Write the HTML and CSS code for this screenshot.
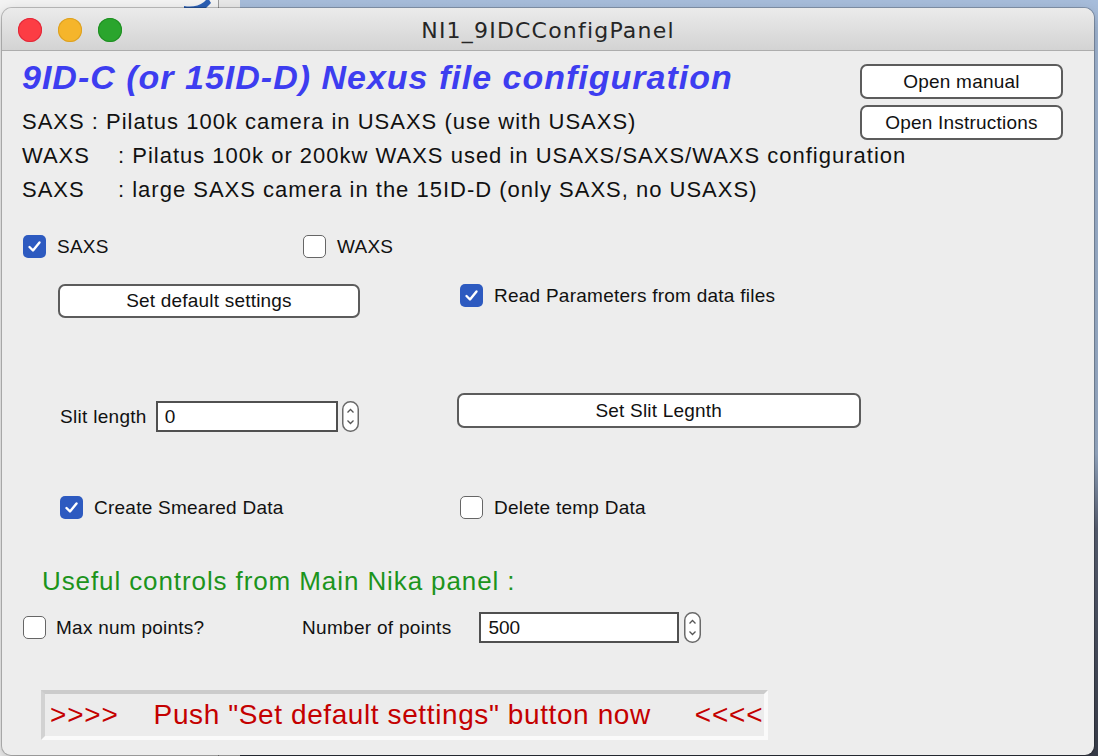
FILE: index.html
```html
<!DOCTYPE html>
<html>
<head>
<meta charset="utf-8">
<title>NI1_9IDCConfigPanel</title>
<link rel="stylesheet" href="styles.css">
</head>
<body>
<div class="backwin">
  <svg class="backarrow" width="32" height="16" viewBox="0 0 32 16"><path d="M2 12 Q14 14 22 8 L26 4 L29 9 L24 14 Q12 18 2 16 Z" fill="#2b5fb4"/></svg>
</div>
<div class="window">
  <div class="titlebar">
    <div class="lights">
      <span class="light red"></span>
      <span class="light yellow"></span>
      <span class="light green"></span>
    </div>
    <div class="title">NI1_9IDCConfigPanel</div>
  </div>
  <div class="panel">
    <div class="header">
      <div class="intro">
        <h1 class="heading">9ID-C (or 15ID-D) Nexus file configuration</h1>
        <p class="line">SAXS : Pilatus 100k camera in USAXS (use with USAXS)</p>
        <p class="line"><span class="tag">WAXS</span>: Pilatus 100k or 200kw WAXS used in USAXS/SAXS/WAXS configuration</p>
        <p class="line"><span class="tag">SAXS</span>: large SAXS camera in the 15ID-D (only SAXS, no USAXS)</p>
      </div>
      <div class="side-buttons">
        <button class="btn btn-side">Open manual</button>
        <button class="btn btn-side">Open Instructions</button>
      </div>
    </div>

    <div class="row row-det">
      <label class="check w-saxs"><span class="box on"><svg width="23" height="23" viewBox="0 0 23 23"><path d="M6.5 12 L10 15.5 L16.5 7.5" fill="none" stroke="#fff" stroke-width="2.4" stroke-linecap="round" stroke-linejoin="round"/></svg></span>SAXS</label>
      <label class="check"><span class="box"></span>WAXS</label>
    </div>

    <div class="row row-default">
      <button class="btn btn-default">Set default settings</button>
      <label class="check check-read"><span class="box on"><svg width="23" height="23" viewBox="0 0 23 23"><path d="M6.5 12 L10 15.5 L16.5 7.5" fill="none" stroke="#fff" stroke-width="2.4" stroke-linecap="round" stroke-linejoin="round"/></svg></span>Read Parameters from data files</label>
    </div>

    <div class="row row-slit">
      <div class="field field-slit">
        <span class="field-label">Slit length</span>
        <span class="input input-slit">0</span>
        <svg class="stepper" width="17" height="31" viewBox="0 0 17 31"><rect x="0.75" y="0.75" width="15.5" height="29.5" rx="7.5" fill="#fff" stroke="#6a6a6a" stroke-width="1.5"/><path d="M5.5 11.5 L8.5 8.5 L11.5 11.5" fill="none" stroke="#555" stroke-width="1.3"/><path d="M5.5 19.5 L8.5 22.5 L11.5 19.5" fill="none" stroke="#555" stroke-width="1.3"/></svg>
      </div>
      <button class="btn btn-slit">Set Slit Legnth</button>
    </div>

    <div class="row row-smear">
      <label class="check w-smear"><span class="box on"><svg width="23" height="23" viewBox="0 0 23 23"><path d="M6.5 12 L10 15.5 L16.5 7.5" fill="none" stroke="#fff" stroke-width="2.4" stroke-linecap="round" stroke-linejoin="round"/></svg></span>Create Smeared Data</label>
      <label class="check"><span class="box"></span>Delete temp Data</label>
    </div>

    <h2 class="useful">Useful controls from Main Nika panel :</h2>

    <div class="row row-points">
      <label class="check check-max w-max"><span class="box"></span>Max num points?</label>
      <span class="field-label">Number of points</span>
      <span class="input input-points">500</span>
      <svg class="stepper" width="17" height="31" viewBox="0 0 17 31"><rect x="0.75" y="0.75" width="15.5" height="29.5" rx="7.5" fill="#fff" stroke="#6a6a6a" stroke-width="1.5"/><path d="M5.5 11.5 L8.5 8.5 L11.5 11.5" fill="none" stroke="#555" stroke-width="1.3"/><path d="M5.5 19.5 L8.5 22.5 L11.5 19.5" fill="none" stroke="#555" stroke-width="1.3"/></svg>
    </div>

    <div class="notice">
      <span class="arrows">&gt;&gt;&gt;&gt;</span>
      <span class="notice-text">Push "Set default settings" button now</span>
      <span class="arrows">&lt;&lt;&lt;&lt;</span>
    </div>
  </div>
</div>
</body>
</html>
```

FILE: styles.css
```css
* { box-sizing: border-box; }

html, body {
  margin: 0;
  padding: 0;
}

body {
  width: 1098px;
  height: 756px;
  overflow: hidden;
  position: relative;
  font-family: "Liberation Sans", Arial, sans-serif;
  background: linear-gradient(#a7bddb 0, #9cb0cb 60%, #5a6174 70%, #3b404d 100%);
}

.backwin {
  position: absolute;
  left: 0;
  top: 0;
  width: 240px;
  height: 756px;
  background: linear-gradient(to right, #f3f3f3 0, #f3f3f3 218px, #9c9c9c 218px, #9c9c9c 219px, #e9e9e9 219px);
}

.backarrow {
  position: absolute;
  left: 182px;
  top: -6px;
}

.window {
  position: absolute;
  left: 2px;
  top: 8px;
  width: 1092px;
  height: 747px;
  background: #ededed;
  border-radius: 10px 10px 9px 9px;
  box-shadow: 0 0 0 1px rgba(0, 0, 0, 0.22), 0 6px 16px rgba(0, 0, 0, 0.25);
  overflow: hidden;
}

.titlebar {
  height: 43px;
  display: grid;
  align-items: center;
  background: linear-gradient(#ebebeb, #d3d3d3);
  border-bottom: 1px solid #adadad;
}

.lights,
.title {
  grid-area: 1 / 1;
}

.lights {
  display: flex;
  gap: 16px;
  padding-left: 16px;
  justify-self: start;
  margin-top: 2px;
}

.light {
  width: 24px;
  height: 24px;
  border-radius: 50%;
}

.red { background: #fc3d44; box-shadow: inset 0 0 0 1px #e0283a; }
.yellow { background: #f5b52b; box-shadow: inset 0 0 0 1px #dba022; }
.green { background: #2aa52d; box-shadow: inset 0 0 0 1px #1f8e22; }

.title {
  justify-self: center;
  font-family: "DejaVu Sans", sans-serif;
  font-size: 22px;
  letter-spacing: 1.2px;
  color: #262626;
  margin-top: 3px;
}

.panel {
  padding: 0 31px 0 20px;
  display: flex;
  flex-direction: column;
  align-items: flex-start;
}

.header {
  display: grid;
  width: 100%;
}

.intro,
.side-buttons {
  grid-area: 1 / 1;
}

.side-buttons {
  justify-self: end;
  display: flex;
  flex-direction: column;
  gap: 6px;
  padding-top: 13px;
}

.heading {
  margin: 6px 0 0 0;
  font-size: 34px;
  line-height: 40px;
  font-weight: bold;
  font-style: italic;
  letter-spacing: 1px;
  color: #3d3df0;
}

.line {
  margin: 0;
  font-size: 22px;
  line-height: 34px;
  letter-spacing: 1px;
  color: #111;
  white-space: nowrap;
}

.heading + .line {
  margin-top: 8px;
}

.tag {
  display: inline-block;
  width: 96px;
}

.btn {
  font-family: "Liberation Sans", Arial, sans-serif;
  font-size: 19px;
  letter-spacing: 0.2px;
  color: #111;
  background: #fff;
  border: 2px solid #5c5c5c;
  border-radius: 7px;
  padding: 0;
  display: flex;
  align-items: center;
  justify-content: center;
}

.btn-side {
  width: 203px;
  height: 35px;
}

.row {
  display: flex;
  align-items: flex-start;
}

.check {
  display: flex;
  align-items: center;
  gap: 11px;
  font-size: 19px;
  letter-spacing: 0.25px;
  color: #111;
  white-space: nowrap;
}

.box {
  width: 23px;
  height: 23px;
  border-radius: 5px;
  background: #fff;
  border: 1.5px solid #666;
  flex: none;
  display: flex;
}

.box.on {
  background: #2d5ac0;
  border: 0;
}

.row-det {
  margin-top: 28px;
  margin-left: 1px;
}

.w-saxs {
  width: 280px;
}

.row-default {
  margin-top: 26px;
}

.btn-default {
  margin-left: 36px;
  width: 302px;
  height: 34px;
}

.check-read {
  margin-left: 100px;
  margin-top: 0;
}

.row-slit {
  margin-top: 75px;
}

.field {
  display: flex;
  align-items: center;
}

.field-slit {
  margin-left: 38px;
  margin-top: 8px;
}

.field-label {
  font-size: 19px;
  letter-spacing: 0.3px;
  color: #111;
  white-space: nowrap;
}

.input {
  background: #fff;
  border: 2px solid #505050;
  font-size: 19px;
  color: #111;
  height: 31px;
  display: flex;
  align-items: center;
  padding-left: 7px;
}

.input-slit {
  margin-left: 9px;
  width: 182px;
}

.stepper {
  margin-left: 4px;
  flex: none;
}

.btn-slit {
  margin-left: 98px;
  width: 404px;
  height: 35px;
}

.row-smear {
  margin-top: 64px;
  margin-left: 38px;
}

.w-smear {
  width: 400px;
}

.useful {
  margin: 46px 0 0 20px;
  font-size: 26px;
  line-height: 32px;
  font-weight: normal;
  letter-spacing: 0.9px;
  color: #1c941c;
}

.row-points {
  margin-top: 15px;
  align-items: center;
}

.check-max {
  gap: 10px;
  margin-left: 1px;
}

.w-max {
  width: 279px;
}

.input-points {
  margin-left: 28px;
  width: 200px;
}

.row-points .stepper {
  margin-left: 5px;
}

.notice {
  margin: 47px 0 0 19px;
  width: 727px;
  height: 50px;
  background: #ececec;
  border-style: solid;
  border-width: 4px;
  border-color: #cbcbcb #fafafa #fafafa #d2d2d2;
  display: flex;
  align-items: center;
  padding-left: 5px;
  color: #c40000;
  font-size: 28px;
  white-space: nowrap;
}

.arrows {
  letter-spacing: 0.8px;
}

.notice-text {
  margin-left: 35px;
  letter-spacing: 0.6px;
}

.notice .arrows:last-child {
  margin-left: 44px;
}
```
